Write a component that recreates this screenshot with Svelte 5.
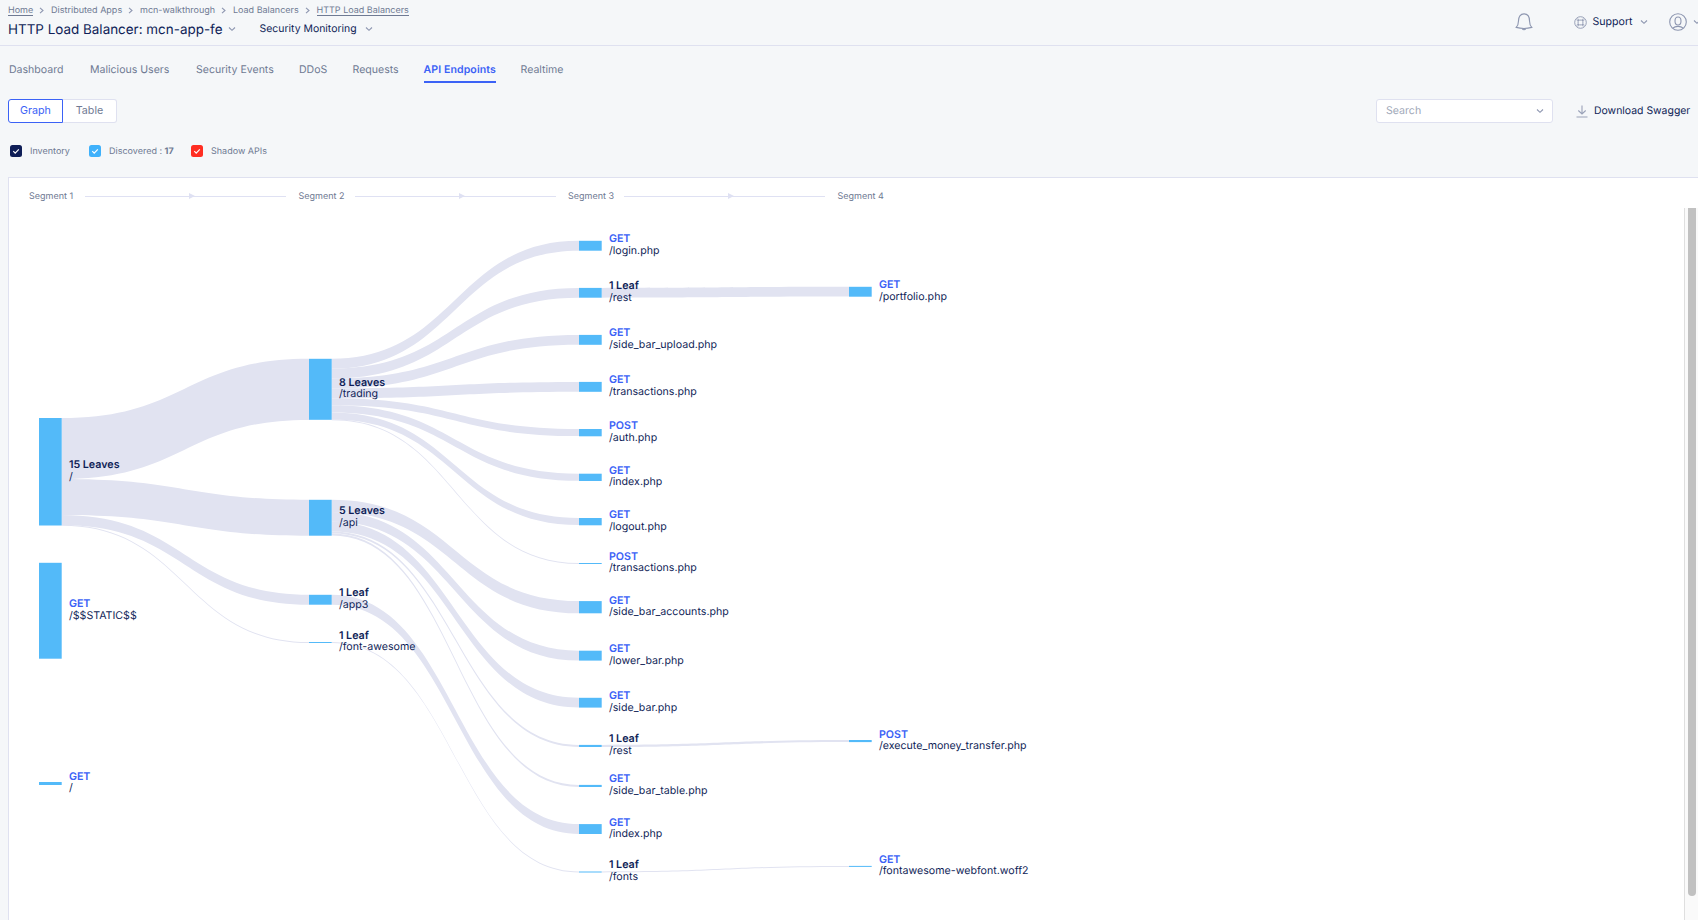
<script>
  const crumbs = ['Home', 'Distributed Apps', 'mcn-walkthrough', 'Load Balancers', 'HTTP Load Balancers'];
  const tabs = ['Dashboard', 'Malicious Users', 'Security Events', 'DDoS', 'Requests', 'API Endpoints', 'Realtime'];

  const columns = [39, 309, 579, 849];
  const nodeWidth = 22.7;

  // id: [column, top, bottom, title, path, title baseline, path baseline]
  const nodes = {
    root: [0, 418, 525.5, '15 Leaves', '/', 468, 480],
    static: [0, 562.8, 658.7, 'GET', '/$$STATIC$$', 607, 619],
    slash: [0, 782, 785, 'GET', '/', 780, 791],
    trading: [1, 358.8, 419.8, '8 Leaves', '/trading', 386, 397],
    api: [1, 499.8, 535.7, '5 Leaves', '/api', 514, 526],
    app3: [1, 594.8, 604.7, '1 Leaf', '/app3', 596, 608],
    awesome: [1, 642, 643, '1 Leaf', '/font-awesome', 639, 650],
    login: [2, 240.8, 250.7, 'GET', '/login.php', 242, 254],
    rest: [2, 287.9, 297.7, '1 Leaf', '/rest', 289, 301],
    upload: [2, 334.9, 344.8, 'GET', '/side_bar_upload.php', 336, 348],
    trans: [2, 381.9, 391.8, 'GET', '/transactions.php', 383, 395],
    auth: [2, 429, 436.3, 'POST', '/auth.php', 429, 441],
    index: [2, 473.7, 481, 'GET', '/index.php', 474, 485],
    logout: [2, 518, 525.3, 'GET', '/logout.php', 518, 530],
    postTrans: [2, 563, 564, 'POST', '/transactions.php', 560, 571],
    accounts: [2, 601.1, 613.3, 'GET', '/side_bar_accounts.php', 604, 615],
    lower: [2, 650.7, 660.6, 'GET', '/lower_bar.php', 652, 664],
    side: [2, 697.8, 707.6, 'GET', '/side_bar.php', 699, 711],
    rest2: [2, 744.9, 747, '1 Leaf', '/rest', 742, 754],
    table: [2, 784.9, 787, 'GET', '/side_bar_table.php', 782, 794],
    index2: [2, 824.1, 834, 'GET', '/index.php', 826, 837],
    fonts: [2, 871.5, 872.5, '1 Leaf', '/fonts', 868, 880],
    portfolio: [3, 286.8, 296.7, 'GET', '/portfolio.php', 288, 300],
    money: [3, 740, 742.1, 'POST', '/execute_money_transfer.php', 738, 749],
    woff: [3, 865.9, 866.9, 'GET', '/fontawesome-webfont.woff2', 863, 874]
  };

  // source, top offset inside the source, thickness, target
  const links = [
    ['root', 0, 61.1, 'trading'], ['root', 61.1, 35.9, 'api'], ['root', 97, 9.9, 'app3'], ['root', 106.8, 1, 'awesome'],
    ['trading', 0, 9.85, 'login'], ['trading', 9.85, 9.85, 'rest'], ['trading', 19.7, 9.85, 'upload'],
    ['trading', 29.55, 9.85, 'trans'], ['trading', 39.4, 7.1, 'auth'], ['trading', 46.5, 7.1, 'index'],
    ['trading', 53.6, 7.1, 'logout'], ['trading', 60.5, 1, 'postTrans'],
    ['api', 0, 12.2, 'accounts'], ['api', 12.2, 9.8, 'lower'], ['api', 22, 9.8, 'side'],
    ['api', 31.8, 2, 'rest2'], ['api', 33.8, 2, 'table'],
    ['app3', 0, 9.9, 'index2'], ['awesome', 0, 0.9, 'fonts'],
    ['rest', 0, 9.8, 'portfolio'], ['rest2', 0, 2.1, 'money'], ['fonts', 0, 1, 'woff']
  ];

  function ribbon([from, offset, size, to]) {
    const x0 = columns[nodes[from][0]] + nodeWidth;
    const x1 = columns[nodes[to][0]];
    const mid = (x0 + x1) / 2;
    const a = nodes[from][1] + offset;
    const b = nodes[to][1];
    return `M${x0},${a}C${mid},${a} ${mid},${b} ${x1},${b}V${b + size}C${mid},${b + size} ${mid},${a + size} ${x0},${a + size}Z`;
  }

  const isMethod = (t) => t === 'GET' || t === 'POST';
  const filters = [
    { name: 'Inventory', color: '#0f1e57' },
    { name: 'Discovered : ', count: '17', color: '#3fb1fb' },
    { name: 'Shadow APIs', color: '#ff2e22' }
  ];
</script>

{#snippet chevron()}
  <svg class="chevron" width="8" height="6" viewBox="0 0 8 6"><path d="M1 1.5 4 4.3 7 1.5" /></svg>
{/snippet}

<div class="page">
  <header>
    <div class="left">
      <nav class="crumbs">
        {#each crumbs as crumb, i}
          {#if i}<svg width="5" height="7" viewBox="0 0 5 7"><path d="M1 .8 4 3.5 1 6.2" /></svg>{/if}
          <span class:under={i === 0 || i === 4}>{crumb}</span>
        {/each}
      </nav>
      <div class="titles">
        <h1>HTTP Load Balancer: mcn-app-fe</h1>
        {@render chevron()}
        <span class="service">Security Monitoring</span>
        {@render chevron()}
      </div>
    </div>
    <div class="tools">
      <svg class="bell" width="18" height="18" viewBox="0 0 18 18"><path d="M1.2 14.4c1.5-1.6 2.2-3 2.2-6C3.4 3.8 5.5.9 9 .9s5.6 2.9 5.6 7.5c0 3 .7 4.4 2.2 6-4.7 1.3-10.9 1.3-15.6 0Z" /><path d="M7.3 15.7c.7 1.3 2.7 1.3 3.4 0" /></svg>
      <i class="rule"></i>
      <svg class="ring" width="13" height="13" viewBox="0 0 13 13"><circle cx="6.5" cy="6.5" r="5.8" /><rect x="4.1" y="4.1" width="4.8" height="4.8" rx="1.4" /><path d="m2.500 3.800 2 .9M3.800 2.500l.9 2M10.500 3.800l-2 .9M9.200 2.500l-.9 2M2.500 9.200l2-.9M3.800 10.500l.9-2M10.500 9.200l-2-.9M9.200 10.500l-.9-2" /></svg>
      <span class="support">Support</span>
      {@render chevron()}
      <svg class="user" width="18" height="18" viewBox="0 0 18 18"><circle cx="9" cy="9" r="8.3" /><ellipse cx="9" cy="8" rx="3" ry="4" /><path d="M3.8 15.200c1.500-1.400 3-1.800 5.200-1.800s3.700.4 5.200 1.800" /></svg>
      {@render chevron()}
    </div>
  </header>

  <nav class="tabs">
    {#each tabs as tab}
      <span class:active={tab === 'API Endpoints'}>{tab}</span>
    {/each}
  </nav>

  <div class="controls">
    <div class="toggle"><button class="on">Graph</button><button>Table</button></div>
    <div class="search"><span>Search</span>{@render chevron()}</div>
    <svg class="download" width="12" height="13" viewBox="0 0 12 13"><path d="M6 .5v8.500M2.300 5.500 6 9l3.700-3.500M.5 12h11" /></svg>
    <span class="swagger">Download Swagger</span>
  </div>

  <div class="filters">
    {#each filters as f}
      <div class="filter">
        <span class="box" style:background={f.color}><svg width="12" height="12" viewBox="0 0 12 12"><path d="m3.300 6.200 1.900 1.900 3.600-3.700" /></svg></span>
        <span class="name">{f.name}{#if f.count}<b>{f.count}</b>{/if}</span>
      </div>
    {/each}
  </div>

  <main>
    <div class="segments">
      {#each [1, 2, 3, 4] as n}
        <div class="segment">
          <span>Segment {n}</span>
          {#if n < 4}<i class="line"></i>{/if}
        </div>
      {/each}
    </div>
    <div class="body">
      <svg class="sankey" width="1675" height="712" viewBox="9 208 1675 712">
        {#each links as link}<path class="link" d={ribbon(link)} />{/each}
        {#each Object.values(nodes) as [col, y0, y1, title, path, ty, py]}
          <rect class="node" x={columns[col]} y={y0} width={nodeWidth} height={y1 - y0} />
          <text class="title" class:method={isMethod(title)} x={columns[col] + 29.9} y={ty + 0.2}>{title}</text>
          <text class="path" x={columns[col] + 29.9} y={py + 0.3}>{path}</text>
        {/each}
      </svg>
      <div class="scroll"><i></i></div>
    </div>
  </main>
</div>

<style>
  :global(body) { margin: 0; overflow: hidden; }
  .page {
    box-sizing: border-box; width: 1698px; height: 920px; overflow: hidden;
    display: flex; flex-direction: column;
    background: #f5f7f9; color: #6f7a93;
    font-family: Inter, sans-serif; font-size: 11px; text-rendering: geometricPrecision;
  }
  svg { display: block; flex: none; fill: none; stroke: #8d96b0; stroke-width: 1.1; }
  header { box-sizing: border-box; height: 46px; flex: none; display: flex; justify-content: space-between; border-bottom: 1px solid #dfe1f0; }
  .left { padding-left: 8px; }
  .crumbs { display: flex; align-items: center; height: 19px; padding-top: 1px; box-sizing: border-box; font-size: 9px; line-height: 11px; }
  .crumbs svg { margin: 0 6.7px 0 6.2px; }
  .under { border-bottom: 1px solid #6f7a93; height: 10px; margin-bottom: -1px; }
  .titles { display: flex; align-items: center; height: 20px; color: #0f1e57; }
  h1 { margin: 1px 5px 0 0; width: 214.5px; white-space: nowrap; font-size: 13.45px; font-weight: 400; }
  .service { margin: -1px 8px 0 24px; width: 97px; white-space: nowrap; font-size: 10.45px; }
  .tools { display: flex; align-items: center; height: 44px; width: 183px; }
  .rule { width: 1px; height: 18px; background: #dfe1f0; margin: 0 22px 0 18px; }
  .ring { stroke-width: .9; margin-left: .5px; }
  .support { color: #0f1e57; width: 40px; margin: -1px 7.5px 0 6px; font-size: 10.6px; }
  .tools .user { margin: 0 5.5px 0 21px; }
  .tabs { display: grid; grid-template-columns: 81px 106px 103px 53.5px 71px 97px auto; justify-content: start; padding: 16px 0 0 9px; height: 37px; box-sizing: border-box; flex: none; line-height: 16px; font-size: 10.55px; }
  .tabs span { justify-self: start; height: 19px; }
  .tabs .active { color: #3b62f6; font-weight: 600; letter-spacing: .1px; border-bottom: 2px solid #3b62f6; }
  .controls { display: flex; align-items: center; height: 24px; margin: 16px 8px 0; flex: none; }
  .toggle { display: flex; }
  button { box-sizing: border-box; width: 54px; height: 24px; padding: 0 0 1px; background: #fff; border: 1px solid #dfe1f0; border-left: 0; border-radius: 0 3px 3px 0; color: #6f7a93; font: inherit; font-size: 10.7px; }
  button.on { width: 55px; border: 1px solid #3b62f6; border-radius: 3px 0 0 3px; color: #3b62f6; }
  .search { box-sizing: border-box; display: flex; align-items: center; justify-content: space-between; width: 177px; height: 24px; margin-left: auto; padding: 0 8px 0 9px; background: #fff; border: 1px solid #dfe1f0; border-radius: 3px; color: #a0a8b8; }
  .search span { margin-top: -2px; font-size: 10.6px; }
  .download { margin: 0 6px 0 23px; stroke: #9aa2b8; }
  .swagger { color: #0f1e57; margin-top: -2px; width: 96px; white-space: nowrap; font-size: 10.45px; }
  .filters { display: grid; grid-template-columns: 79px 102px auto; height: 12px; margin: 21px 0 21px 10px; flex: none; font-size: 9px; }
  .filter { display: flex; align-items: center; gap: 8px; }
  .name { line-height: 12px; padding-top: 1.5px; }
  .box { width: 12px; height: 12px; border-radius: 2.5px; }
  .box svg { stroke: #fff; stroke-width: 1.2; }
  main { box-sizing: border-box; flex: 1; margin-left: 8px; border: solid #dfe1f0; border-width: 1px 0 0 1px; background: #fff; }
  .segments { display: flex; height: 30px; padding-left: 20px; font-size: 9px; }
  .segment { display: flex; align-items: center; width: 269.5px; padding-top: 6px; box-sizing: border-box; }
  .segment span { width: 56px; line-height: 12px; padding-top: 1.5px; }
  .line { position: relative; width: 201px; height: 1px; background: #dfe1f3; }
  .line::after { content: ''; position: absolute; left: 104px; top: -3px; border: solid transparent; border-width: 3.5px 0 3.5px 6px; border-left-color: #dfe1f3; }
  .body { display: flex; height: 712px; }
  .sankey { stroke: none; }
  .link { fill: #e1e3f1; }
  .node { fill: #53baf9; }
  text { font-size: 10.65px; fill: #0f1e57; }
  .title { font-weight: 600; font-size: 10.7px; }
  .method { fill: #3b62f6; }
  .scroll { box-sizing: border-box; width: 14px; border-left: 1px solid #dfdfdf; background: #fafafa; padding-left: 3px; }
  .scroll i { display: block; width: 8px; height: 688px; background: #c1c1c1; border-radius: 0 0 4px 4px; }
</style>
